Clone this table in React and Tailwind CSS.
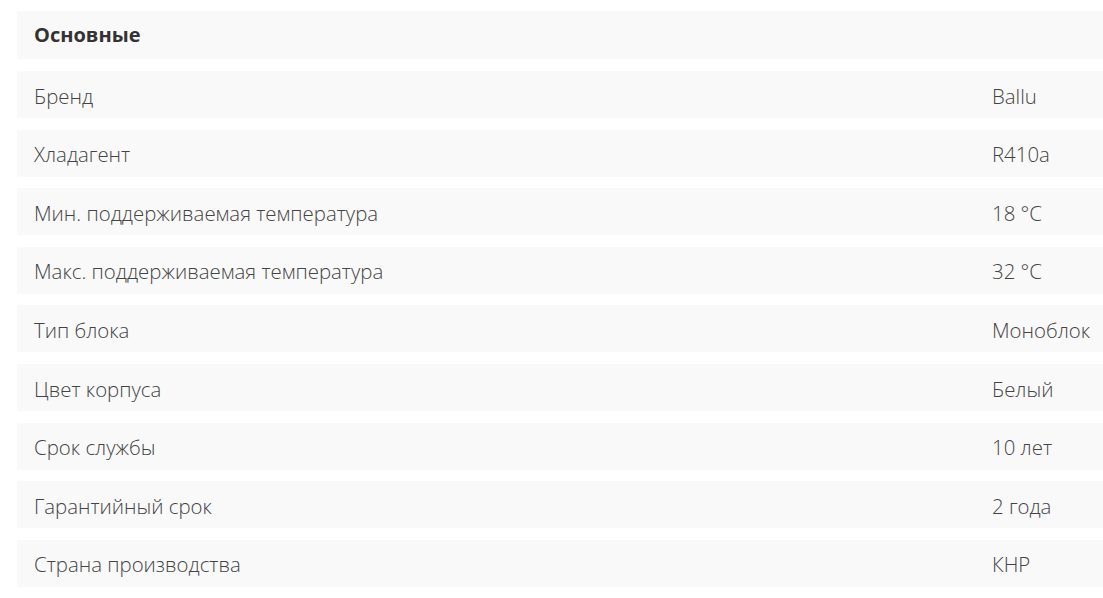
const rows = [
  { label: "Бренд", value: "Ballu" },
  { label: "Хладагент", value: "R410a" },
  { label: "Мин. поддерживаемая температура", value: "18 °C" },
  { label: "Макс. поддерживаемая температура", value: "32 °C" },
  { label: "Тип блока", value: "Моноблок" },
  { label: "Цвет корпуса", value: "Белый" },
  { label: "Срок службы", value: "10 лет" },
  { label: "Гарантийный срок", value: "2 года" },
  { label: "Страна производства", value: "КНР" },
]

export default function App() {
  return (
    <div
      className="w-[1103px] h-[598px] bg-white pt-[11px] pl-[17px] overflow-hidden"
      style={{ fontFamily: '"Open Sans", "Noto Sans", sans-serif' }}
    >
      <div className="flex flex-col gap-[11.6px]">
        {/* HEADER */}
        <div className="h-[48.4px] bg-[#f9f9f9] flex items-center pl-[17px]">
          <h2 className="text-[20px] font-bold text-[#333333] -mt-[1px]">Основные</h2>
        </div>

        {/* ROWS */}
        {rows.map((row, index) => (
          <div
            key={index}
            className="h-[47px] bg-[#f9f9f9] flex items-center pl-[17px] pt-[3px] text-[20.4px] font-light text-[#444444]"
          >
            <span className="w-[958px] shrink-0">{row.label}</span>
            <span>{row.value}</span>
          </div>
        ))}
      </div>
    </div>
  )
}
